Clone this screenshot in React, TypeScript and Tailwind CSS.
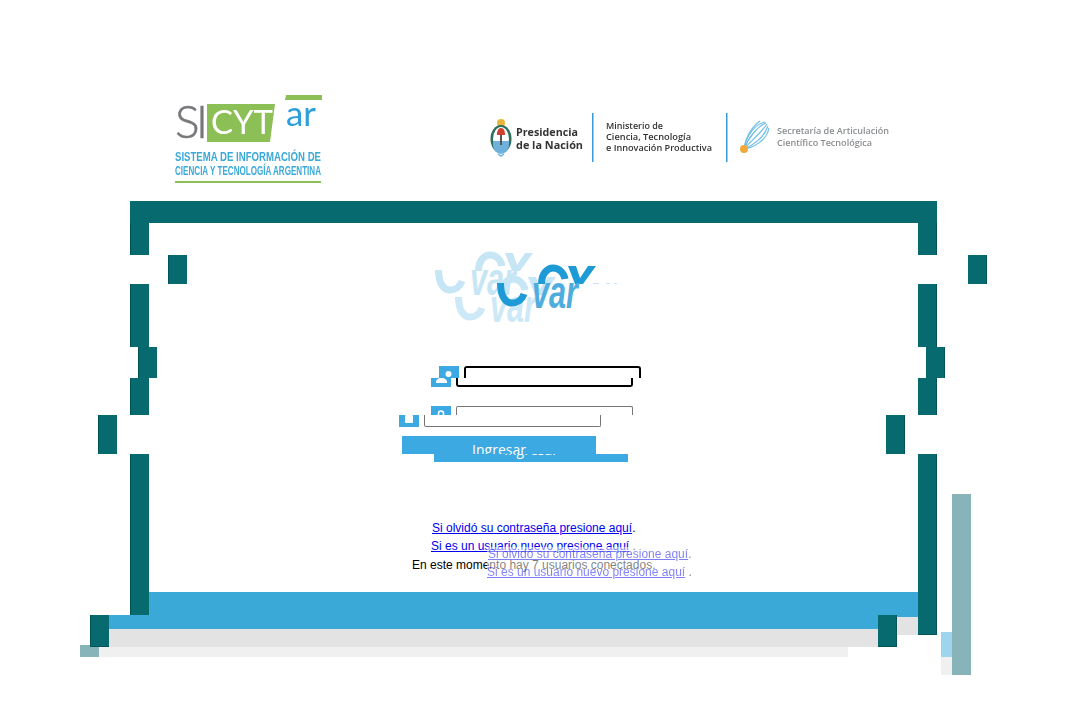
const frameTiles = [
  // left edge
  'left-[130px] top-[201px] w-[807px] h-[22px]',
  'left-[130px] top-[223px] w-[19px] h-[32px] border-l border-[#03545a]',
  'left-[168px] top-[255px] w-[19px] h-[29px] border-l border-[#03545a]',
  'left-[130px] top-[284px] w-[19px] h-[63px] border-l border-[#03545a]',
  'left-[138px] top-[347px] w-[19px] h-[31px] border-l border-[#03545a]',
  'left-[130px] top-[378px] w-[19px] h-[37px] border-l border-[#03545a]',
  'left-[98px] top-[415px] w-[19px] h-[39px] border-l border-[#03545a]',
  'left-[130px] top-[454px] w-[19px] h-[161px] border-l border-[#03545a]',
  'left-[90px] top-[615px] w-[19px] h-[32px] border-l border-b border-[#03545a]',
  // right edge
  'left-[918px] top-[223px] w-[19px] h-[32px] border-r border-[#03545a]',
  'left-[968px] top-[255px] w-[19px] h-[29px] border-r border-[#03545a]',
  'left-[918px] top-[284px] w-[19px] h-[63px] border-r border-[#03545a]',
  'left-[926px] top-[347px] w-[19px] h-[31px] border-r border-[#03545a]',
  'left-[918px] top-[378px] w-[19px] h-[37px] border-r border-[#03545a]',
  'left-[886px] top-[415px] w-[19px] h-[39px] border-r border-[#03545a]',
  'left-[918px] top-[454px] w-[19px] h-[181px] border-r border-b border-[#03545a]',
  'left-[878px] top-[615px] w-[19px] h-[32px] border-r border-b border-[#03545a]'
]

const footerTiles = [
  'left-[149px] top-[592px] w-[769px] h-[23px] bg-[#3ba9d7]',
  'left-[109px] top-[615px] w-[769px] h-[14px] bg-[#3ba9d7]',
  'left-[897px] top-[615px] w-[21px] h-[2px] bg-[#3ba9d7]',
  'left-[109px] top-[629px] w-[769px] h-[18px] bg-[#e3e3e3]',
  'left-[897px] top-[617px] w-[21px] h-[18px] bg-[#e3e3e3]',
  'left-[99px] top-[647px] w-[749px] h-[10px] bg-[#f0f0f0]',
  'left-[80px] top-[645px] w-[19px] h-[12px] bg-[#87b4b8]',
  'left-[941px] top-[632px] w-[11px] h-[25px] bg-[#9dd5ec]',
  'left-[941px] top-[657px] w-[11px] h-[18px] bg-[#f0f0f0]',
  'left-[952px] top-[494px] w-[19px] h-[181px] bg-[#87b4b8]'
]

function SicytLogo() {
  return (
    <svg width="150" height="92" viewBox="0 0 150 92" className="blur-[0.4px] shrink-0">
      <text x="1 22" y="45" fontFamily="Lato" fontWeight="300" fontSize="46" fill="#77787b" stroke="#77787b" strokeWidth="0.6">SI</text>
      <polygon points="33,11 101,11 96,49 33,49" fill="#8cbf55" />
      <text x="37" y="41" fontFamily="Lato" fontWeight="400" fontSize="33" fill="#fff" textLength="62" lengthAdjust="spacingAndGlyphs">CYT</text>
      <polygon points="112,2 148,2 148,7 111,7" fill="#8cbf55" />
      <text x="112" y="33" fontFamily="Lato" fontWeight="400" fontSize="35" fill="#2e9fd8" textLength="30" lengthAdjust="spacingAndGlyphs">ar</text>
      <text x="1" y="68" fontFamily="Liberation Sans" fontWeight="700" fontSize="12.5" fill="#3ba9d7" textLength="146" lengthAdjust="spacingAndGlyphs">SISTEMA DE INFORMACIÓN DE</text>
      <text x="1" y="82" fontFamily="Liberation Sans" fontWeight="700" fontSize="12.5" fill="#3ba9d7" textLength="146" lengthAdjust="spacingAndGlyphs">CIENCIA Y TECNOLOGÍA ARGENTINA</text>
      <rect x="1" y="88" width="146" height="2" fill="#8cbf55" />
    </svg>
  )
}

function MinisterioLogo() {
  return (
    <svg width="404" height="55" viewBox="0 0 404 55" className="blur-[0.3px] shrink-0">
      {/* escudo */}
      <circle cx="13" cy="13" r="4" fill="#e8b63a" />
      <ellipse cx="13" cy="29" rx="10.5" ry="14" fill="#2c6f5c" />
      <ellipse cx="13" cy="29" rx="8" ry="12" fill="#fff" />
      <path d="M5 31h16v4a8 9 0 0 1-16 0z" fill="#6fb1dc" />
      <path d="M13 18c3 0 4 3 4 7h-8c0-4 1-7 4-7z" fill="#d0402f" />
      <rect x="12" y="25" width="2" height="10" fill="#555" />
      <path d="M10 44l3 2 3-2" stroke="#6fb1dc" strokeWidth="1.5" fill="none" />

      <text x="28" y="26" fontFamily="Open Sans" fontWeight="700" fontSize="10.5" fill="#333" textLength="62" lengthAdjust="spacingAndGlyphs">Presidencia</text>
      <text x="28" y="39" fontFamily="Open Sans" fontWeight="700" fontSize="10.5" fill="#333" textLength="67" lengthAdjust="spacingAndGlyphs">de la Nación</text>
      <rect x="104" y="3" width="1.5" height="49" fill="#3a9ad9" />

      <text x="118" y="19" fontFamily="Open Sans" fontWeight="600" fontSize="9" fill="#333" textLength="57" lengthAdjust="spacingAndGlyphs">Ministerio de</text>
      <text x="118" y="30" fontFamily="Open Sans" fontWeight="600" fontSize="9" fill="#333" textLength="85" lengthAdjust="spacingAndGlyphs">Ciencia, Tecnología</text>
      <text x="118" y="41" fontFamily="Open Sans" fontWeight="600" fontSize="9" fill="#333" textLength="106" lengthAdjust="spacingAndGlyphs">e Innovación Productiva</text>
      <rect x="238" y="3" width="1.5" height="49" fill="#3a9ad9" />

      {/* cometa */}
      <g fill="none" stroke="#6dbde9" strokeWidth="1.2">
        <path d="M256 39C258 26 267 14 277 12" />
        <path d="M256 39C260 28 270 16 278 13" />
        <path d="M256 39C262 32 274 22 279 14" />
        <path d="M256 39C264 36 276 28 280 16" />
        <path d="M256 39C257 30 262 18 272 11" />
        <path d="M256 39C265 38 279 30 281 18" />
      </g>
      <circle cx="256" cy="39" r="4" fill="#f0a93a" />

      <text x="289" y="24" fontFamily="Open Sans" fontWeight="600" fontSize="9" fill="#8a8d90" textLength="112" lengthAdjust="spacingAndGlyphs">Secretaría de Articulación</text>
      <text x="289" y="36" fontFamily="Open Sans" fontWeight="600" fontSize="9" fill="#8a8d90" textLength="95" lengthAdjust="spacingAndGlyphs">Científico Tecnológica</text>
    </svg>
  )
}

function CvarTop({ x, y, color }: { x: number; y: number; color: string }) {
  return (
    <g transform={`translate(${x} ${y})`} fill={color}>
      <path d="M3.500 19C3.500 9 9 3 15 3C21 3 26 8 27 14" fill="none" stroke={color} strokeWidth="7" />
      <polygon points="30,1 38,1 42,13 50,1 58,1 45,19 37,19" />
    </g>
  )
}

function CvarBottom({ x, y, color, textColor }: { x: number; y: number; color: string; textColor?: string }) {
  return (
    <g transform={`translate(${x} ${y})`}>
      <path d="M3.500 0C3.500 14 9 20 15 20C20 20 25 17 27 11" fill="none" stroke={color} strokeWidth="7" />
      <text x="35" y="25" fontFamily="Liberation Sans" fontWeight="700" fontStyle="italic" fontSize="46" fill={textColor ?? color} textLength="46" lengthAdjust="spacingAndGlyphs">var</text>
    </g>
  )
}

function UserIcon() {
  return (
    <svg width="20" height="22" viewBox="0 0 20 22" className="block bg-[#3ca9e2]">
      <circle cx="9.500" cy="8" r="3" fill="#fff" />
      <path d="M5 17v-1c0-2 2-4 5.500-4s5.500 2 5.500 4v1z" fill="#fff" />
    </svg>
  )
}

function LockIcon() {
  return (
    <svg width="20" height="22" viewBox="0 0 20 22" className="block bg-[#3ca9e2]">
      <path d="M7.500 9V7.500a2.500 2.500 0 0 1 5 0V9" fill="none" stroke="#fff" strokeWidth="1.6" />
      <rect x="6" y="9" width="8" height="8" rx="1" fill="#fff" />
    </svg>
  )
}

export default function App() {
  return (
    <div className="relative w-[1080px] h-[720px] overflow-hidden bg-white font-['Liberation_Sans',sans-serif]">
      <header className="flex items-start pl-[174px] pt-[93px]">
        <SicytLogo />
        <div className="ml-[164px] mt-[17px]">
          <MinisterioLogo />
        </div>
      </header>

      {footerTiles.map(tile => (
        <div key={tile} className={`absolute ${tile}`} />
      ))}
      {frameTiles.map(tile => (
        <div key={tile} className={`absolute bg-[#066a6f] ${tile}`} />
      ))}

      {/* logo cortado */}
      <svg width="210" height="90" viewBox="0 0 210 90" className="absolute left-[420px] top-[240px]">
        <CvarTop x={55} y={12} color="#c6e5f5" />
        <CvarBottom x={15} y={30} color="#c6e5f5" />
        <CvarBottom x={35} y={57} color="#cde8f6" />
        <CvarTop x={78} y={36} color="#c6e5f5" />
        <CvarTop x={118} y={25} color="#1e9bd7" />
        <CvarBottom x={77} y={43} color="#1e9bd7" textColor="#4fadde" />
        <rect x="173" y="43" width="6" height="1" fill="#c6e5f5" />
        <rect x="186" y="43" width="4" height="1" fill="#c6e5f5" />
        <rect x="194" y="43" width="3" height="1" fill="#c6e5f5" />
      </svg>

      {/* usuario */}
      <div className="absolute left-[439px] top-[366px] w-[20px] h-[12px] overflow-hidden"><UserIcon /></div>
      <div className="absolute left-[431px] top-[378px] w-[20px] h-[9px] overflow-hidden"><div className="-mt-[12px]"><UserIcon /></div></div>
      <div className="absolute left-[464px] top-[366px] w-[177px] h-[12px] border-2 border-b-0 border-black rounded-t-[3px]" />
      <div className="absolute left-[456px] top-[378px] w-[177px] h-[9px] border-2 border-t-0 border-black rounded-b-[3px]" />

      {/* clave */}
      <div className="absolute left-[431px] top-[406px] w-[20px] h-[9px] overflow-hidden"><LockIcon /></div>
      <div className="absolute left-[399px] top-[415px] w-[20px] h-[12px] overflow-hidden"><div className="-mt-[9px]"><LockIcon /></div></div>
      <div className="absolute left-[456px] top-[406px] w-[177px] h-[9px] border border-b-0 border-[#767676] rounded-t-[2px]" />
      <div className="absolute left-[424px] top-[415px] w-[177px] h-[12px] border border-t-0 border-[#767676] rounded-b-[2px]" />

      {/* boton */}
      <div className="absolute left-[402px] top-[436px] w-[194px] h-[18px] overflow-hidden bg-[#3ca9e2]">
        <p className="text-center text-white text-[14px] leading-[20px] pt-[4px] font-['Open_Sans',sans-serif]">Ingresar</p>
      </div>
      <div className="absolute left-[434px] top-[454px] w-[194px] h-[8px] overflow-hidden bg-[#3ca9e2]">
        <p className="-mt-[18px] text-center text-white text-[14px] leading-[20px] pt-[4px] font-['Open_Sans',sans-serif]">Ingresar</p>
      </div>

      {/* enlaces */}
      <div className="absolute left-[412px] top-[521px] w-[260px] text-[12px] leading-[14px] text-black">
        <p className="pl-[20px]"><a className="text-[#0000ee] underline" href="#">Si olvidó su contraseña presione aquí</a>.</p>
        <p className="pl-[19px] mt-[4px]"><a className="text-[#0000ee] underline" href="#">Si es un usuario nuevo presione aquí</a> .</p>
        <p className="mt-[5px]">En este momento hay 7 usuarios conectados.</p>
      </div>
      <div className="absolute left-[487px] top-[547px] w-[210px] h-[33px] bg-white/50 text-[12px] leading-[14px] text-black">
        <div className="opacity-50">
          <p className="pl-[1px]"><a className="text-[#0000ee] underline" href="#">Si olvidó su contraseña presione aquí</a>.</p>
          <p className="mt-[4px]"><a className="text-[#0000ee] underline" href="#">Si es un usuario nuevo presione aquí</a> .</p>
        </div>
      </div>
    </div>
  )
}
